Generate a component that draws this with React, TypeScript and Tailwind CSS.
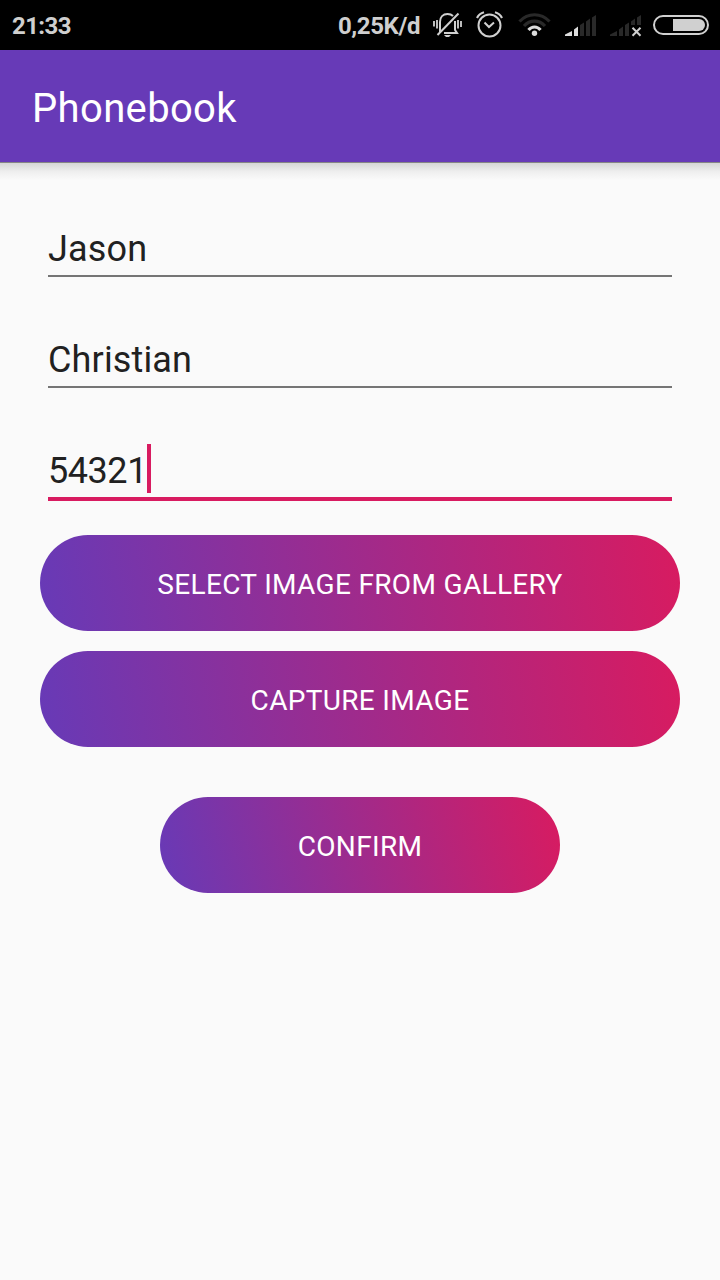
function MutedBell() {
  return (
    <svg className="ml-3 shrink-0" width="32" height="30" viewBox="0 0 32 30" fill="none" stroke="#d0d0d0" strokeWidth="2">
      <path d="M8 22V12C8 7 11 4 15.500 4C18 4 20 5 21 6" />
      <path d="M23 11V20L25 23H12" />
      <path d="M5.500 25L26.500 3.500" />
      <path d="M12 25H19L17 27H14Z" fill="#d0d0d0" stroke="none" />
      <path d="M2 11V16.500M5 10V18.500M26 10V18.500M29 11V17" strokeWidth="1.800" />
    </svg>
  );
}

function AlarmClock() {
  return (
    <svg className="ml-[11px] shrink-0" width="30" height="30" viewBox="0 0 30 30" fill="none" stroke="#d0d0d0" strokeWidth="2">
      <circle cx="14.500" cy="15.500" r="11" />
      <path d="M9.500 12.500L14 17L19 12.500" />
      <path d="M2 8C3.500 5 6 3 9 2.200M27 8C25.500 5 23 3 20 2.200" strokeWidth="2.200" />
    </svg>
  );
}

function Wifi() {
  return (
    <svg className="ml-3 shrink-0" width="36" height="30" viewBox="0 0 36 30" fill="none">
      <path d="M2.500 11.500C11 2.500 24 2.500 32.500 11.500" stroke="#292929" strokeWidth="3.200" />
      <path d="M7 16C13 9.500 22 9.500 28 16" stroke="#292929" strokeWidth="3.200" />
      <path d="M11.500 20C15 16 20 16 23.500 20" stroke="#dcdcdc" strokeWidth="3.200" />
      <circle cx="17.500" cy="23.300" r="2.700" fill="#dcdcdc" />
    </svg>
  );
}

function Signal() {
  return (
    <svg className="ml-[11px] shrink-0" width="34" height="22" viewBox="0 0 34 22">
      <path d="M1 22V20.500L8 17V22Z M10 22V15.500L14 12.500V22Z" fill="#dcdcdc" />
      <path d="M16 22V11L20 8.500V22Z M22 22V7.500L26 4.500V22Z M28 22V3.500L32 1V22Z" fill="#292929" />
    </svg>
  );
}

function NoSignal() {
  return (
    <svg className="ml-[11px] shrink-0 overflow-visible" width="34" height="22" viewBox="0 0 34 22">
      <path d="M1 22V20.500L8 17V22Z M10 22V15.500L14 12.500V22Z M16 22V11L20 8.500V22Z M22 11V7.500L26 4.500V11Z M28 11V3.500L32 1V11Z" fill="#292929" />
      <path d="M23.500 13.700L31.500 21.700M31.500 13.700L23.500 21.700" stroke="#d0d0d0" strokeWidth="2" />
    </svg>
  );
}

function Battery() {
  return (
    <svg className="ml-[9px] shrink-0" width="58" height="22" viewBox="0 0 58 22">
      <rect x="2" y="2" width="54" height="18" rx="9" fill="none" stroke="#d0d0d0" strokeWidth="2" />
      <path d="M21 5H47A6 6 0 0 1 47 17H21Z" fill="#d0d0d0" />
    </svg>
  );
}

function StatusBar() {
  return (
    <div className="flex h-[50px] items-center bg-black pr-2.5 pl-3 text-2xl font-bold text-[#cfcfcf]">
      <span className="mt-0.5 mr-auto tracking-[-0.6px]">21:33</span>
      <span className="mt-0.5 whitespace-nowrap tracking-[-0.4px]">0,25K/d</span>
      <MutedBell />
      <AlarmClock />
      <Wifi />
      <Signal />
      <NoSignal />
      <Battery />
    </div>
  );
}

function Field({ value }: { value: string }) {
  return (
    <div className="h-[57px] border-b-2 border-[#757575] pt-px text-4xl leading-[57px] tracking-[0.15px]">
      {value}
    </div>
  );
}

export default function App() {
  return (
    <div className="h-[1280px] w-[720px] overflow-hidden bg-[#fafafa] font-['Roboto',sans-serif] text-[#212121]">
      <StatusBar />
      <header className="flex h-[112px] items-center bg-[#673ab7] pt-1.5 pl-8 text-[40px] leading-none tracking-[0.35px] text-white">
        <h1>Phonebook</h1>
      </header>
      <div className="h-[18px] border-t border-[#858585] bg-linear-to-b from-[#d6d6d6] via-[#eeeeee] to-[#fafafa]" />
      <main>
        <div className="flex flex-col gap-[54px] px-12 pt-10">
          <Field value="Jason" />
          <Field value="Christian" />
          <div className="flex h-[59px] border-b-4 border-[#d81b60] text-4xl leading-[59px] tracking-[-0.45px]">
            54321
            <span className="mt-[2px] h-[49px] w-[4px] bg-[#d81b60]" />
          </div>
        </div>
        <div className="flex flex-col gap-5 px-10 pt-[34px] text-[28px] tracking-[0.33px] text-white">
          <button className="h-24 rounded-full bg-[linear-gradient(81.470deg,#673ab7,#d81b60)] pt-[3px]">SELECT IMAGE FROM GALLERY</button>
          <button className="h-24 rounded-full bg-[linear-gradient(81.470deg,#673ab7,#d81b60)] pt-[3px]">CAPTURE IMAGE</button>
          <button className="mx-auto mt-[30px] h-24 w-[400px] rounded-full bg-[linear-gradient(76.500deg,#673ab7,#d81b60)] pt-[3px]">CONFIRM</button>
        </div>
      </main>
    </div>
  );
}
